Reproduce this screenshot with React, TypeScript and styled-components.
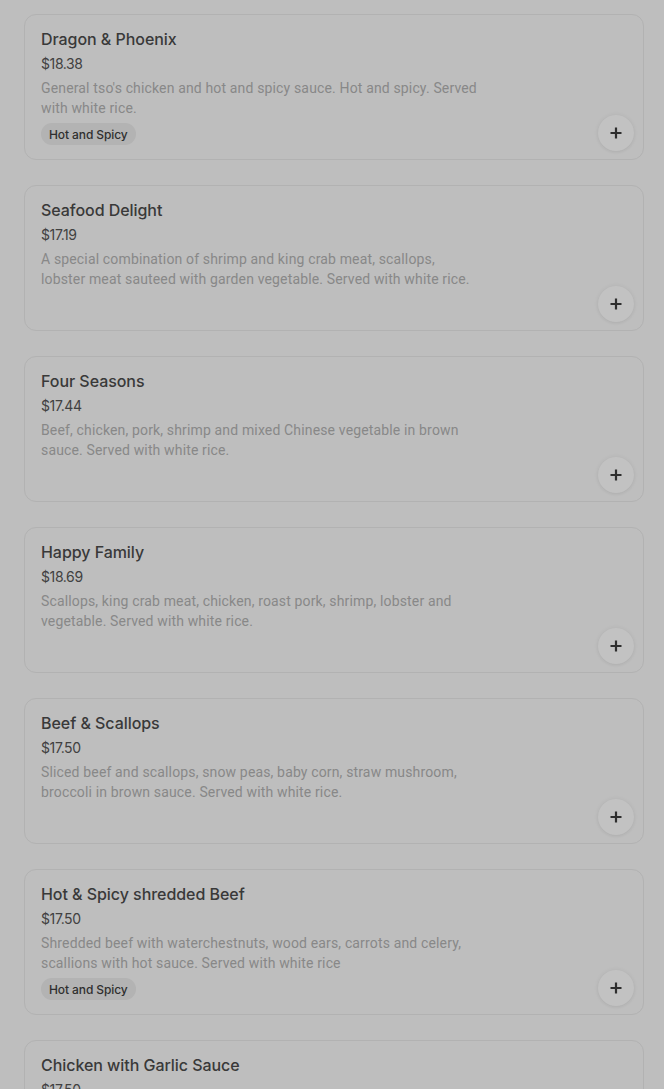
import React from "react";
import styled, { createGlobalStyle } from "styled-components";

const Global = createGlobalStyle`
  html, body { margin: 0; padding: 0; background: #bebebe; }
  body { font-family: Inter, "Noto Sans", Arial, sans-serif; -webkit-font-smoothing: antialiased; }
  * { box-sizing: border-box; }
`;

const Page = styled.div`
  display: flex;
  flex-direction: column;
  gap: 25px;
  padding: 14px 20px 20px 24px;
  height: 1089px;
  overflow: hidden;
`;

const Card = styled.div`
  flex: none;
  display: flex;
  height: 146px;
  border: 1px solid #b2b2b2;
  border-radius: 12px;
  padding: 12px 9px 8px 16px;
  background: #bebebe;
`;

const Info = styled.div`
  flex: none;
  width: 438px;
  display: flex;
  flex-direction: column;
  align-items: flex-start;
`;

const Title = styled.div`
  font-size: 16px;
  line-height: 24px;
  font-weight: 500;
  color: #393939;
  letter-spacing: -0.05px;
`;

const Price = styled.div`
  margin-top: 3px;
  font-size: 14px;
  line-height: 20px;
  color: #414141;
  letter-spacing: -0.4px;
`;

const Desc = styled.div`
  margin-top: 4px;
  font-family: Roboto, Arial, sans-serif;
  font-size: 14px;
  line-height: 20px;
  color: #888888;
  letter-spacing: 0.15px;
`;

const Tag = styled.span`
  margin-top: 5px;
  display: inline-flex;
  align-items: center;
  height: 22px;
  padding: 0 8px;
  border-radius: 11px;
  background: #b3b3b3;
  color: #2f2f2f;
  font-size: 12px;
  font-weight: 500;
  letter-spacing: -0.1px;
`;

const Spacer = styled.div`
  flex: 1;
`;

const AddButton = styled.button`
  align-self: flex-end;
  flex: none;
  width: 36px;
  height: 36px;
  border: none;
  border-radius: 50%;
  background: #c2c2c2;
  box-shadow: 0 0 5px rgba(0, 0, 0, 0.06), 0 1px 3px rgba(0, 0, 0, 0.05);
  display: flex;
  align-items: center;
  justify-content: center;
  padding: 0;
  cursor: pointer;
`;

type Item = { name: string; price: string; desc: string; tag?: string };

const items: Item[] = [
  {
    name: "Dragon & Phoenix",
    price: "$18.38",
    desc: "General tso's chicken and hot and spicy sauce. Hot and spicy. Served with white rice.",
    tag: "Hot and Spicy",
  },
  {
    name: "Seafood Delight",
    price: "$17.19",
    desc: "A special combination of shrimp and king crab meat, scallops, lobster meat sauteed with garden vegetable. Served with white rice.",
  },
  {
    name: "Four Seasons",
    price: "$17.44",
    desc: "Beef, chicken, pork, shrimp and mixed Chinese vegetable in brown sauce. Served with white rice.",
  },
  {
    name: "Happy Family",
    price: "$18.69",
    desc: "Scallops, king crab meat, chicken, roast pork, shrimp, lobster and vegetable. Served with white rice.",
  },
  {
    name: "Beef & Scallops",
    price: "$17.50",
    desc: "Sliced beef and scallops, snow peas, baby corn, straw mushroom, broccoli in brown sauce. Served with white rice.",
  },
  {
    name: "Hot & Spicy shredded Beef",
    price: "$17.50",
    desc: "Shredded beef with waterchestnuts, wood ears, carrots and celery, scallions with hot sauce. Served with white rice",
    tag: "Hot and Spicy",
  },
  {
    name: "Chicken with Garlic Sauce",
    price: "$17.50",
    desc: "Sliced chicken with mixed vegetables in garlic sauce. Served with white rice.",
  },
];

const PlusIcon = () => (
  <svg width="14" height="14" viewBox="0 0 14 14" aria-hidden="true">
    <path d="M7 1.5v11M1.5 7h11" stroke="#2e2e2e" strokeWidth="2.2" strokeLinecap="butt" />
  </svg>
);

export default function App() {
  return (
    <>
      <Global />
      <Page>
        {items.map((it) => (
          <Card key={it.name}>
            <Info>
              <Title>{it.name}</Title>
              <Price>{it.price}</Price>
              <Desc>{it.desc}</Desc>
              {it.tag && <Tag>{it.tag}</Tag>}
            </Info>
            <Spacer />
            <AddButton aria-label={`Add ${it.name}`}>
              <PlusIcon />
            </AddButton>
          </Card>
        ))}
      </Page>
    </>
  );
}
